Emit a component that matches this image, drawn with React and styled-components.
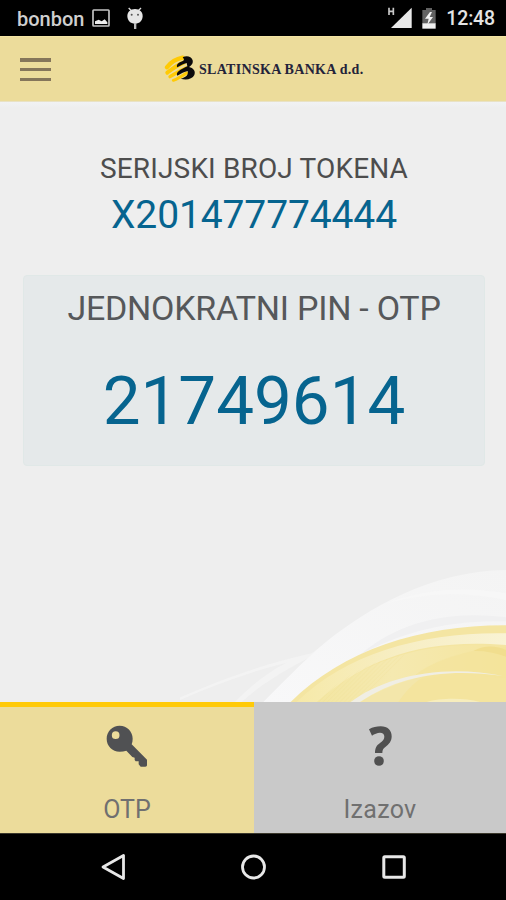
import React from 'react';
import styled, { createGlobalStyle } from 'styled-components';

const Global = createGlobalStyle`
  * { box-sizing: border-box; }
  html, body { margin: 0; padding: 0; background: #000; }
  svg { display: block; flex: none; }
`;

const Screen = styled.div`
  width: 506px;
  height: 900px;
  display: flex;
  flex-direction: column;
  overflow: hidden;
  background: #eeeeee;
  font-family: Roboto, "Liberation Sans", sans-serif;
`;

const StatusBar = styled.div`
  height: 36px;
  flex: none;
  display: flex;
  align-items: center;
  justify-content: space-between;
  background: #000;
  padding: 0 11px 0 17px;
`;

const StatusText = styled.span`
  color: ${(p) => p.$color};
  font-size: ${(p) => p.$size}px;
  font-weight: 500;
  line-height: 36px;
  letter-spacing: ${(p) => p.$spacing || 0}px;
  padding-top: 2px;
  white-space: nowrap;
`;

const StatusGroup = styled.div`
  display: flex;
  align-items: center;
  gap: ${(p) => p.$gap}px;
`;

const Header = styled.header`
  height: 66px;
  flex: none;
  display: grid;
  grid-template-columns: 164px auto 1fr;
  align-items: center;
  background: #ecdc9b;
  border-top: 1px solid #f3e4a4;
  border-bottom: 1px solid #e9e2c4;
`;

const MenuButton = styled.button`
  width: 31px;
  height: 23px;
  margin: 1px 0 0 20px;
  padding: 0;
  border: 0;
  background: none;
  display: flex;
  flex-direction: column;
  justify-content: space-between;
`;

const MenuLine = styled.span`
  display: block;
  height: 3.5px;
  background: #85765a;
`;

const Brand = styled.div`
  display: flex;
  align-items: center;
  gap: 3px;
`;

const BrandName = styled.span`
  font-family: "Liberation Serif", serif;
  font-weight: 700;
  font-size: 14px;
  line-height: 20px;
  letter-spacing: 0.3px;
  padding-top: 2px;
  color: #23233a;
  white-space: nowrap;
`;

const Main = styled.main`
  position: relative;
  height: 600px;
  flex: none;
  padding: 49px 21px 0 23px;
  background: linear-gradient(#f1f2f4 0, #eeeeee 6px);
`;

const Line = styled.div`
  color: ${(p) => p.$color};
  font-size: ${(p) => p.$size}px;
  line-height: ${(p) => p.$height}px;
  letter-spacing: ${(p) => p.$spacing || 0}px;
  text-align: center;
  white-space: nowrap;
`;

const Card = styled.section`
  height: 191px;
  margin-top: 31px;
  padding-top: 12px;
  background: #e5e9ea;
  border: 1px solid #e0e8e7;
  border-radius: 4px;
`;

const Swoosh = styled.svg`
  position: absolute;
  right: 0;
  bottom: 0;
`;

const Tabs = styled.nav`
  height: 131px;
  flex: none;
  display: grid;
  grid-template-columns: 254px 252px;
`;

const Tab = styled.div`
  display: flex;
  flex-direction: column;
  align-items: center;
  padding-top: 18px;
  gap: 27px;
  background: ${(p) => (p.$active ? '#ecdc9b' : '#c9c9c9')};
  border-top: 5px solid ${(p) => (p.$active ? '#ffca08' : '#c9c9c9')};
`;

const TabLabel = styled.span`
  color: #707070;
  font-size: 25px;
  line-height: 30px;
  letter-spacing: ${(p) => p.$spacing || 0}px;
`;

const NavBar = styled.div`
  height: 67px;
  flex: none;
  display: grid;
  grid-template-columns: 140px 140px 1fr;
  align-items: center;
  padding-left: 101px;
  background: #000;
  border-top: 1px solid #3a372b;
`;

const Logo = () => (
  <svg width="32" height="28" viewBox="10 10 96 84">
    <g fill="none" stroke="#ffca05" strokeLinecap="round">
      <path d="M19 47 C30 32 44 22 66 18" strokeWidth="13" />
      <path d="M20 63 C34 52 46 42 70 32" strokeWidth="12" />
      <path d="M28 75 C42 67 54 58 76 49" strokeWidth="10" />
      <path d="M38 86 C50 82 60 76 78 64" strokeWidth="9" />
    </g>
    <path d="M66 17 C78 10 92 14 96 26 C98 36 92 42 85 46 C98 49 106 58 101 70 C95 83 76 86 60 81 C75 78 84 70 81 58 C72 60 60 66 50 72 C48 68 48 64 52 60 C62 52 72 48 80 44 L78 34 C68 36 60 42 50 47 C47 42 49 38 54 34 C64 28 76 28 66 17Z" fill="#0c0b0c" />
  </svg>
);

const PictureIcon = () => (
  <svg width="18" height="18" viewBox="0 0 54 54">
    <rect x="3" y="3" width="48" height="48" rx="2" fill="none" stroke="#c4c4c4" strokeWidth="5" />
    <path d="M9 45 V37 L20 32 L29 37 L38 31 L46 40 V45Z" fill="#eee" />
  </svg>
);

const BugIcon = () => (
  <svg width="16" height="23" viewBox="0 0 48 69">
    <path d="M5 3 L14 12 M42 3 L33 12" stroke="#ddd" strokeWidth="4" />
    <path d="M24 6 C38 6 47 15 47 27 C47 40 38 50 24 50 C10 50 1 40 1 27 C1 15 10 6 24 6Z" fill="#e6e6e6" />
    <rect x="21" y="48" width="7" height="18" fill="#bdbdbd" />
    <circle cx="14" cy="23" r="3" fill="#555" />
    <circle cx="33" cy="23" r="3" fill="#555" />
  </svg>
);

const SignalIcon = () => (
  <svg width="24" height="22" viewBox="0 0 72 66">
    <path d="M3 2 V24 M16 2 V24 M3 13 H16" stroke="#c8c8c8" strokeWidth="5" fill="none" />
    <path d="M71 2 V63 H9Z" fill="#e9e9e9" />
  </svg>
);

const BatteryIcon = () => (
  <svg width="14" height="21" viewBox="0 0 42 63">
    <path d="M12 0 H30 V6 H41 V48 H1 V6 H12Z" fill="#626262" />
    <path d="M1 46 H41 V62 H1Z" fill="#f0f0f0" />
    <path d="M24 12 L9 32 H20 L16 50 L33 27 H23 L30 12Z" fill="#f3f3f3" />
  </svg>
);

const KeyIcon = () => (
  <svg width="42" height="43" viewBox="319 104 126 129">
    <path fillRule="evenodd" fill="#505153" d="M360 106 C382 106 399 123 399 145 C399 151 398 157 396 162 L442 208 V224 C442 227 440 229 437 229 H423 L417 222 V213 H408 L405 209 V202 L398 200 L380 181 C374 183 367 184 360 184 C338 184 321 167 321 145 C321 123 338 106 360 106Z M348 123 A11.5 11.5 0 1 0 348 146 A11.5 11.5 0 1 0 348 123Z" />
  </svg>
);

const QuestionIcon = () => (
  <svg width="42" height="43" viewBox="318 104 126 129">
    <path fill="#505050" d="M348 117 C360 110 370 108 383 108 C404 108 416 120 416 138 C416 153 408 162 398 169 C391 174 388 178 388 188 H366 C366 173 371 165 381 158 C390 151 394 147 394 139 C394 131 389 127 381 127 C373 127 364 131 357 136Z" />
    <circle cx="378" cy="212" r="14.5" fill="#505050" />
  </svg>
);

const Waves = () => (
  <Swoosh width="326" height="142" viewBox="0 0 978 426" preserveAspectRatio="none">
    <defs>
      <linearGradient id="mist" x1="0" y1="1" x2="1" y2="0">
        <stop offset="0" stopColor="#f8f8f9" />
        <stop offset="1" stopColor="#f4f4f4" />
      </linearGradient>
      <linearGradient id="gold" x1="0" y1="0" x2="1" y2="0">
        <stop offset="0" stopColor="#f3e6a2" />
        <stop offset=".4" stopColor="#f5e9b0" />
        <stop offset="1" stopColor="#f5e59e" />
      </linearGradient>
      <linearGradient id="rim" x1="0" y1="0" x2="1" y2="0">
        <stop offset="0" stopColor="#f6e9a8" />
        <stop offset=".5" stopColor="#f7eec4" />
        <stop offset="1" stopColor="#f9f3d4" />
      </linearGradient>
      <pattern id="hatch" width="9" height="9" patternUnits="userSpaceOnUse" patternTransform="rotate(45)">
        <path d="M0 0 V9" stroke="#ead47a" strokeWidth="2" />
      </pattern>
    </defs>
    <path d="M0 412 C140 352 260 310 395 280 L445 242 L430 270 C355 310 255 360 185 426 L165 426 C225 365 275 330 320 308 C210 335 100 375 0 420Z" fill="#f3f3f3" />
    <path d="M250 426 C330 345 385 290 445 240 C560 150 750 32 978 30 V200 C720 205 520 280 345 426Z" fill="url(#mist)" />
    <path d="M620 130 C730 88 850 78 978 100 V120 C850 92 730 100 620 130Z" fill="#f7f7f7" />
    <path d="M540 284 C640 200 780 146 978 172 V184 C790 178 650 225 540 284Z" fill="#f0f0f1" />
    <path d="M332 426 C490 270 720 195 978 196 V426Z" fill="#f4e5a2" />
    <path d="M350 426 C500 278 735 215 978 220 V255 C740 235 560 290 415 426Z" fill="url(#rim)" />
    <path d="M410 426 C570 285 760 240 978 260 V426Z" fill="url(#gold)" />
    <path d="M410 426 C480 355 570 300 675 285 C640 330 600 365 535 426Z" fill="url(#hatch)" opacity=".35" />
    <path d="M700 350 C760 300 860 268 978 262 V426 H700Z" fill="#f4e39a" opacity=".6" />
    <path d="M880 273 C915 253 950 258 978 270 V290 C945 278 915 272 880 273Z" fill="#f1de8e" />
    <path d="M545 426 C660 350 810 335 978 355 V426Z" fill="#f4e49e" />
    <path d="M545 426 C610 385 660 365 730 350 C700 370 680 390 655 426Z" fill="#f3e6aa" />
    <path d="M512 426 C610 350 790 310 970 348 C800 324 660 346 540 426Z" fill="#f0eee4" />
    <path d="M740 426 C780 414 850 412 900 426Z" fill="#f7edbd" />
  </Swoosh>
);

export default function App() {
  return (
    <Screen>
      <Global />
      <StatusBar>
        <StatusGroup $gap={17}>
          <StatusGroup $gap={8}>
            <StatusText $color="#cfcfcf" $size={20}>bonbon</StatusText>
            <PictureIcon />
          </StatusGroup>
          <BugIcon />
        </StatusGroup>
        <StatusGroup $gap={10}>
          <SignalIcon />
          <BatteryIcon />
          <StatusText $color="#e4e4e4" $size={19.5} $spacing={-0.15}>12:48</StatusText>
        </StatusGroup>
      </StatusBar>
      <Header>
        <MenuButton aria-label="Menu">
          <MenuLine />
          <MenuLine />
          <MenuLine />
        </MenuButton>
        <Brand>
          <Logo />
          <BrandName>SLATINSKA BANKA d.d.</BrandName>
        </Brand>
      </Header>
      <Main>
        <Waves />
        <Line $color="#4d4d4d" $size={28} $height={36} $spacing={0.15}>SERIJSKI BROJ TOKENA</Line>
        <Line $color="#06648f" $size={39} $height={57} $spacing={-0.12}>X201477774444</Line>
        <Card>
          <Line $color="#56585a" $size={34} $height={41} $spacing={-0.25}>JEDNOKRATNI PIN - OTP</Line>
          <Line $color="#06648f" $size={67.3} $height={144}>21749614</Line>
        </Card>
      </Main>
      <Tabs>
        <Tab $active>
          <KeyIcon />
          <TabLabel>OTP</TabLabel>
        </Tab>
        <Tab>
          <QuestionIcon />
          <TabLabel $spacing={0.3}>Izazov</TabLabel>
        </Tab>
      </Tabs>
      <NavBar>
        <svg width="26" height="28" viewBox="0 0 26 28">
          <path d="M2 14 L22.5 2.5 V25.5Z" fill="none" stroke="#e8e8e8" strokeWidth="2.8" strokeLinejoin="round" />
        </svg>
        <svg width="26" height="26" viewBox="0 0 26 26">
          <circle cx="12.5" cy="13" r="11" fill="none" stroke="#e8e8e8" strokeWidth="2.8" />
        </svg>
        <svg width="26" height="26" viewBox="0 0 26 26">
          <rect x="2.8" y="2.8" width="20.5" height="20.5" rx="1" fill="none" stroke="#e8e8e8" strokeWidth="3" />
        </svg>
      </NavBar>
    </Screen>
  );
}
